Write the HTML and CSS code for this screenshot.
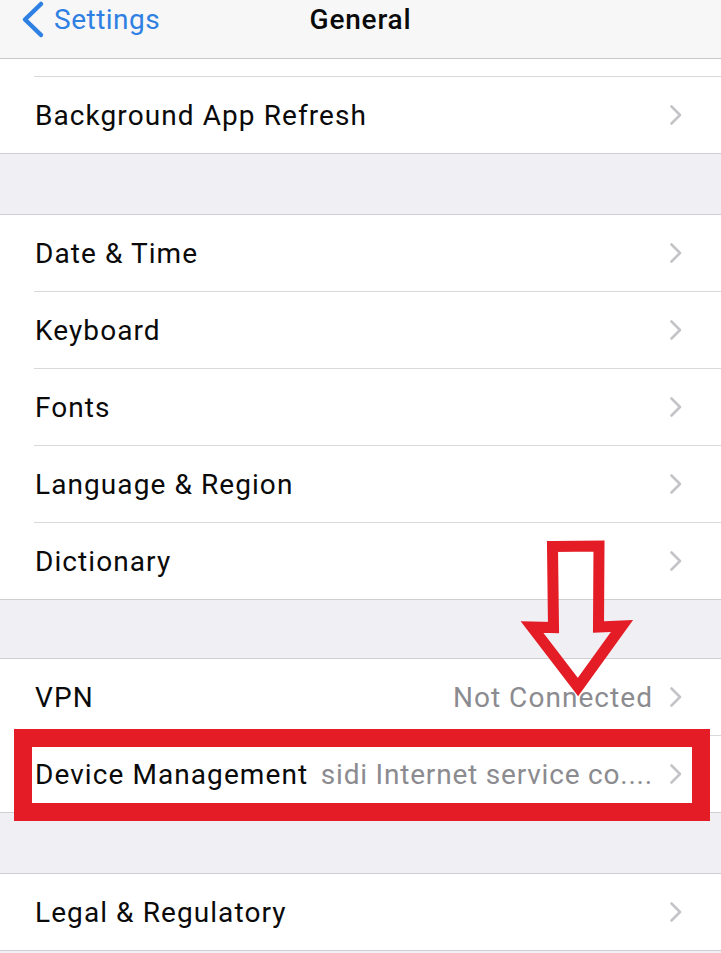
FILE: index.html
```html
<!DOCTYPE html>
<html lang="en">
<head>
<meta charset="utf-8">
<title>General</title>
<link rel="stylesheet" href="styles.css">
</head>
<body>
<div class="screen">
  <header class="nav">
    <div class="nav-back">
      <svg class="back-chevron" width="26" height="40" viewBox="0 0 26 40"><polyline points="21,4 5,19.5 21,35" fill="none" stroke="#2f80e3" stroke-width="4.5" stroke-linecap="round" stroke-linejoin="round"/></svg>
      <span class="back-label">Settings</span>
    </div>
    <div class="nav-title">General</div>
    <div class="nav-spacer"></div>
  </header>

  <section class="group group-first">
    <div class="cell cell-stub"><div class="cell-body stub-body"></div></div>
    <div class="cell"><div class="cell-body"><span class="label">Background App Refresh</span><svg class="chev" width="14" height="22" viewBox="0 0 14 22"><polyline points="2.5,2.5 11,11 2.5,19.5" fill="none" stroke="#c4c4c8" stroke-width="2.6" stroke-linecap="round" stroke-linejoin="round"/></svg></div></div>
  </section>

  <div class="spacer"></div>

  <section class="group">
    <div class="cell"><div class="cell-body"><span class="label">Date &amp; Time</span><svg class="chev" width="14" height="22" viewBox="0 0 14 22"><polyline points="2.5,2.5 11,11 2.5,19.5" fill="none" stroke="#c4c4c8" stroke-width="2.6" stroke-linecap="round" stroke-linejoin="round"/></svg></div></div>
    <div class="cell"><div class="cell-body"><span class="label">Keyboard</span><svg class="chev" width="14" height="22" viewBox="0 0 14 22"><polyline points="2.5,2.5 11,11 2.5,19.5" fill="none" stroke="#c4c4c8" stroke-width="2.6" stroke-linecap="round" stroke-linejoin="round"/></svg></div></div>
    <div class="cell"><div class="cell-body"><span class="label">Fonts</span><svg class="chev" width="14" height="22" viewBox="0 0 14 22"><polyline points="2.5,2.5 11,11 2.5,19.5" fill="none" stroke="#c4c4c8" stroke-width="2.6" stroke-linecap="round" stroke-linejoin="round"/></svg></div></div>
    <div class="cell"><div class="cell-body"><span class="label">Language &amp; Region</span><svg class="chev" width="14" height="22" viewBox="0 0 14 22"><polyline points="2.5,2.5 11,11 2.5,19.5" fill="none" stroke="#c4c4c8" stroke-width="2.6" stroke-linecap="round" stroke-linejoin="round"/></svg></div></div>
    <div class="cell"><div class="cell-body"><span class="label">Dictionary</span><svg class="chev" width="14" height="22" viewBox="0 0 14 22"><polyline points="2.5,2.5 11,11 2.5,19.5" fill="none" stroke="#c4c4c8" stroke-width="2.6" stroke-linecap="round" stroke-linejoin="round"/></svg></div></div>
  </section>

  <div class="spacer spacer-mid"></div>

  <section class="group">
    <div class="cell"><div class="cell-body"><span class="label">VPN</span><span class="detail">Not Connected</span><svg class="chev" width="14" height="22" viewBox="0 0 14 22"><polyline points="2.5,2.5 11,11 2.5,19.5" fill="none" stroke="#c4c4c8" stroke-width="2.6" stroke-linecap="round" stroke-linejoin="round"/></svg></div></div>
    <div class="cell"><div class="cell-body"><span class="label label-fit">Device Management</span><span class="detail detail-grow">sidi Internet service co....</span><svg class="chev" width="14" height="22" viewBox="0 0 14 22"><polyline points="2.5,2.5 11,11 2.5,19.5" fill="none" stroke="#c4c4c8" stroke-width="2.6" stroke-linecap="round" stroke-linejoin="round"/></svg></div></div>
  </section>

  <div class="spacer"></div>

  <section class="group">
    <div class="cell"><div class="cell-body"><span class="label">Legal &amp; Regulatory</span><svg class="chev" width="14" height="22" viewBox="0 0 14 22"><polyline points="2.5,2.5 11,11 2.5,19.5" fill="none" stroke="#c4c4c8" stroke-width="2.6" stroke-linecap="round" stroke-linejoin="round"/></svg></div></div>
  </section>

  <div class="highlight-box"></div>
  <svg class="arrow" width="130" height="170" viewBox="0 0 130 170"><polygon points="37.5,11.5 84,11 83.5,92 107,91 63,152 17,92 38.5,92.5" fill="none" stroke="#e41c25" stroke-width="11" stroke-linejoin="miter" stroke-miterlimit="10"/></svg>
</div>
</body>
</html>
```
FILE: styles.css
```css
* { box-sizing: content-box; }
html, body { margin: 0; padding: 0; }
body {
  background: #efeff4;
  font-family: Roboto, "Liberation Sans", sans-serif;
  color: #0a0a0a;
  width: 721px;
  height: 953px;
  overflow: hidden;
}
.screen { position: relative; width: 721px; height: 953px; }

.nav {
  height: 58px;
  background: #f7f7f7;
  border-bottom: 1px solid #c9c9cd;
  display: grid;
  grid-template-columns: 1fr auto 1fr;
  align-items: start;
}
.nav-back {
  display: flex;
  align-items: center;
  padding-left: 20px;
  height: 40px;
  gap: 8px;
}
.back-label {
  color: #2f80e3;
  font-size: 28px;
  line-height: 40px;
  letter-spacing: 0.5px;
}
.nav-title {
  font-size: 28px;
  font-weight: 500;
  line-height: 40px;
  letter-spacing: 0.8px;
  color: #0a0a0a;
}

.group {
  background: #fff;
  border-top: 1px solid #cfcfd3;
  border-bottom: 1px solid #cfcfd3;
}
.group-first { border-top: none; }
.cell { padding-left: 34px; }
.cell-body {
  height: 76px;
  display: flex;
  align-items: center;
  padding-right: 38px;
}
.cell + .cell .cell-body { border-top: 1px solid #d9d9dd; }
.stub-body { height: 17px; }
.label {
  flex: 1;
  font-size: 28px;
  letter-spacing: 1.08px;
  padding-left: 1px;
  white-space: nowrap;
}
.label-fit { flex: 0 0 auto; }
.detail {
  font-size: 28px;
  letter-spacing: 1.05px;
  color: #8b8b90;
  margin-right: 16px;
  white-space: nowrap;
}
.detail-grow { flex: 1; text-align: right; padding-left: 8px; letter-spacing: 0.8px; }
.chev { flex: 0 0 auto; display: block; }

.spacer { height: 60px; }
.spacer-mid { height: 58px; }

.highlight-box {
  position: absolute;
  left: 14px;
  top: 729px;
  width: 660px;
  height: 56px;
  border: 18px solid #e41c25;
}
.arrow {
  position: absolute;
  left: 515px;
  top: 535px;
}
```
